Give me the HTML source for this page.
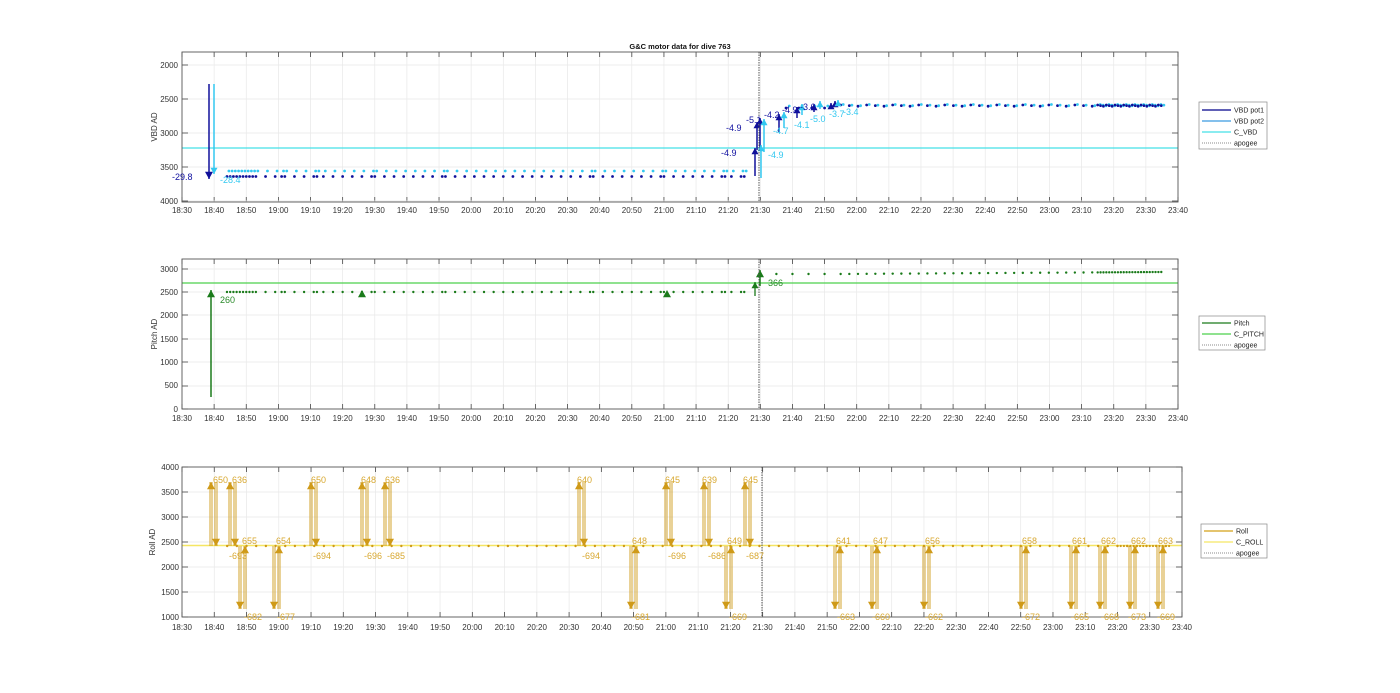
<!DOCTYPE html>
<html><head><meta charset="utf-8"><style>
html,body{margin:0;padding:0;background:#fff;}
svg{display:block;font-family:"Liberation Sans",Arial,sans-serif;}
.t{font-size:8px;fill:#333;}
.lg{font-size:7px;fill:#222;}
</style></head><body>
<svg id="s" width="1400" height="693" viewBox="0 0 1400 693" xmlns="http://www.w3.org/2000/svg">
<rect width="1400" height="693" fill="#fff"/>
<g id="grid"></g>
<g id="data"></g>
<text x="680" y="49" text-anchor="middle" style="font-size:7.5px;font-weight:bold;fill:#111">G&amp;C motor data for dive 763</text>
<!-- y labels -->
<text class="t" transform="translate(157,127) rotate(-90)" text-anchor="middle">VBD AD</text>
<text class="t" transform="translate(157,334) rotate(-90)" text-anchor="middle">Pitch AD</text>
<text class="t" transform="translate(155,542) rotate(-90)" text-anchor="middle">Roll AD</text>
<g class="t" text-anchor="end">
<text x="178" y="68">2000</text><text x="178" y="102">2500</text><text x="178" y="136">3000</text><text x="178" y="170">3500</text><text x="178" y="204">4000</text>
<text x="178" y="272">3000</text><text x="178" y="295">2500</text><text x="178" y="318">2000</text><text x="178" y="342">1500</text><text x="178" y="365">1000</text><text x="178" y="388">500</text><text x="178" y="412">0</text>
<text x="179" y="470">4000</text><text x="179" y="495">3500</text><text x="179" y="520">3000</text><text x="179" y="545">2500</text><text x="179" y="570">2000</text><text x="179" y="595">1500</text><text x="179" y="620">1000</text>
</g>
<g class="t" text-anchor="middle">
<text x="182" y="213">18:30</text><text x="214.1" y="213">18:40</text><text x="246.3" y="213">18:50</text><text x="278.4" y="213">19:00</text><text x="310.5" y="213">19:10</text><text x="342.7" y="213">19:20</text><text x="374.8" y="213">19:30</text><text x="406.9" y="213">19:40</text><text x="439" y="213">19:50</text><text x="471.2" y="213">20:00</text><text x="503.3" y="213">20:10</text><text x="535.4" y="213">20:20</text><text x="567.6" y="213">20:30</text><text x="599.7" y="213">20:40</text><text x="631.8" y="213">20:50</text><text x="664" y="213">21:00</text><text x="696.1" y="213">21:10</text><text x="728.2" y="213">21:20</text><text x="760.3" y="213">21:30</text><text x="792.5" y="213">21:40</text><text x="824.6" y="213">21:50</text><text x="856.7" y="213">22:00</text><text x="888.9" y="213">22:10</text><text x="921" y="213">22:20</text><text x="953.1" y="213">22:30</text><text x="985.3" y="213">22:40</text><text x="1017.4" y="213">22:50</text><text x="1049.5" y="213">23:00</text><text x="1081.6" y="213">23:10</text><text x="1113.8" y="213">23:20</text><text x="1145.9" y="213">23:30</text><text x="1178" y="213">23:40</text>
</g>
<g class="t" text-anchor="middle">
<text x="182" y="421">18:30</text><text x="214.1" y="421">18:40</text><text x="246.3" y="421">18:50</text><text x="278.4" y="421">19:00</text><text x="310.5" y="421">19:10</text><text x="342.7" y="421">19:20</text><text x="374.8" y="421">19:30</text><text x="406.9" y="421">19:40</text><text x="439" y="421">19:50</text><text x="471.2" y="421">20:00</text><text x="503.3" y="421">20:10</text><text x="535.4" y="421">20:20</text><text x="567.6" y="421">20:30</text><text x="599.7" y="421">20:40</text><text x="631.8" y="421">20:50</text><text x="664" y="421">21:00</text><text x="696.1" y="421">21:10</text><text x="728.2" y="421">21:20</text><text x="760.3" y="421">21:30</text><text x="792.5" y="421">21:40</text><text x="824.6" y="421">21:50</text><text x="856.7" y="421">22:00</text><text x="888.9" y="421">22:10</text><text x="921" y="421">22:20</text><text x="953.1" y="421">22:30</text><text x="985.3" y="421">22:40</text><text x="1017.4" y="421">22:50</text><text x="1049.5" y="421">23:00</text><text x="1081.6" y="421">23:10</text><text x="1113.8" y="421">23:20</text><text x="1145.9" y="421">23:30</text><text x="1178" y="421">23:40</text>
</g>
<g class="t" text-anchor="middle">
<text x="182" y="630">18:30</text><text x="214.3" y="630">18:40</text><text x="246.5" y="630">18:50</text><text x="278.8" y="630">19:00</text><text x="311" y="630">19:10</text><text x="343.3" y="630">19:20</text><text x="375.6" y="630">19:30</text><text x="407.8" y="630">19:40</text><text x="440.1" y="630">19:50</text><text x="472.3" y="630">20:00</text><text x="504.6" y="630">20:10</text><text x="536.9" y="630">20:20</text><text x="569.1" y="630">20:30</text><text x="601.4" y="630">20:40</text><text x="633.6" y="630">20:50</text><text x="665.9" y="630">21:00</text><text x="698.2" y="630">21:10</text><text x="730.4" y="630">21:20</text><text x="762.7" y="630">21:30</text><text x="794.9" y="630">21:40</text><text x="827.2" y="630">21:50</text><text x="859.5" y="630">22:00</text><text x="891.7" y="630">22:10</text><text x="924" y="630">22:20</text><text x="956.2" y="630">22:30</text><text x="988.5" y="630">22:40</text><text x="1020.8" y="630">22:50</text><text x="1053" y="630">23:00</text><text x="1085.3" y="630">23:10</text><text x="1117.5" y="630">23:20</text><text x="1149.8" y="630">23:30</text><text x="1182" y="630">23:40</text>
</g>
<!-- panel 1 labels -->
<g style="font-size:9px">
<text x="172" y="180" fill="#1010a0">-29.8</text>
<text x="220" y="183" fill="#33c8f0">-28.4</text>
<text x="721" y="156" fill="#1010a0">-4.9</text>
<text x="726" y="131" fill="#1010a0">-4.9</text>
<text x="746" y="123" fill="#1010a0">-5.1</text>
<text x="764" y="118" fill="#1010a0">-4.2</text>
<text x="782" y="113" fill="#1010a0">-4.9</text>
<text x="800" y="110" fill="#1010a0">-3.6</text>
<text x="768" y="158" fill="#33c8f0">-4.9</text>
<text x="773" y="134" fill="#33c8f0">-4.7</text>
<text x="794" y="128" fill="#33c8f0">-4.1</text>
<text x="810" y="122" fill="#33c8f0">-5.0</text>
<text x="829" y="117" fill="#33c8f0">-3.7</text>
<text x="843" y="115" fill="#33c8f0">-3.4</text>
</g>
<g style="font-size:9px" fill="#2a8a2a">
<text x="220" y="303">260</text><text x="768" y="286">366</text>
</g>
<!-- legends -->
<g>
<rect x="1199" y="102" width="68" height="47" fill="#fff" stroke="#888" stroke-width="0.7"/>
<line x1="1202" y1="110" x2="1231" y2="110" stroke="#00008b" stroke-width="1.2"/><text class="lg" x="1234" y="112.5">VBD pot1</text>
<line x1="1202" y1="121" x2="1231" y2="121" stroke="#3a9be0" stroke-width="1.2"/><text class="lg" x="1234" y="123.5">VBD pot2</text>
<line x1="1202" y1="132" x2="1231" y2="132" stroke="#44e0e8" stroke-width="1.2"/><text class="lg" x="1234" y="134.5">C_VBD</text>
<line x1="1202" y1="143" x2="1231" y2="143" stroke="#666" stroke-width="0.8" stroke-dasharray="1,1"/><text class="lg" x="1234" y="145.5">apogee</text>
<rect x="1199" y="316" width="66" height="34" fill="#fff" stroke="#888" stroke-width="0.7"/>
<line x1="1202" y1="323" x2="1231" y2="323" stroke="#1a7a1a" stroke-width="1.2"/><text class="lg" x="1234" y="325.5">Pitch</text>
<line x1="1202" y1="334" x2="1231" y2="334" stroke="#4cd14c" stroke-width="1.2"/><text class="lg" x="1234" y="336.5">C_PITCH</text>
<line x1="1202" y1="345" x2="1231" y2="345" stroke="#666" stroke-width="0.8" stroke-dasharray="1,1"/><text class="lg" x="1234" y="347.5">apogee</text>
<rect x="1201" y="524" width="66" height="34" fill="#fff" stroke="#888" stroke-width="0.7"/>
<line x1="1204" y1="531" x2="1233" y2="531" stroke="#d4a017" stroke-width="1.2"/><text class="lg" x="1236" y="533.5">Roll</text>
<line x1="1204" y1="542" x2="1233" y2="542" stroke="#f5e663" stroke-width="1.2"/><text class="lg" x="1236" y="544.5">C_ROLL</text>
<line x1="1204" y1="553" x2="1233" y2="553" stroke="#666" stroke-width="0.8" stroke-dasharray="1,1"/><text class="lg" x="1236" y="555.5">apogee</text>
</g>
<!-- roll labels static -->
<g style="font-size:9px" fill="#d8a830">
<text x="213" y="483">650</text><text x="232" y="483">636</text><text x="229" y="559">-693</text>
<text x="242" y="544">655</text><text x="244" y="620">-682</text>
<text x="276" y="544">654</text><text x="277" y="620">-677</text>
<text x="311" y="483">650</text><text x="313" y="559">-694</text>
<text x="361" y="483">648</text><text x="364" y="559">-696</text>
<text x="385" y="483">636</text><text x="387" y="559">-685</text>
<text x="577" y="483">640</text><text x="582" y="559">-694</text>
<text x="632" y="544">648</text><text x="632" y="620">-681</text>
<text x="665" y="483">645</text><text x="668" y="559">-696</text>
<text x="702" y="483">639</text><text x="708" y="559">-686</text>
<text x="727" y="544">649</text><text x="729" y="620">-669</text>
<text x="743" y="483">645</text><text x="746" y="559">-687</text>
<text x="836" y="544">641</text><text x="837" y="620">-663</text>
<text x="873" y="544">647</text><text x="872" y="620">-660</text>
<text x="925" y="544">656</text><text x="925" y="620">-662</text>
<text x="1022" y="544">658</text><text x="1022" y="620">-672</text>
<text x="1072" y="544">661</text><text x="1071" y="620">-665</text>
<text x="1101" y="544">662</text><text x="1101" y="620">-668</text>
<text x="1131" y="544">662</text><text x="1128" y="620">-673</text>
<text x="1158" y="544">663</text><text x="1157" y="620">-669</text>
</g>
</svg>
<script>
(function(){
var NS="http://www.w3.org/2000/svg",G=document.getElementById("grid"),D=document.getElementById("data");
function el(p,n,a){var e=document.createElementNS(NS,n);for(var k in a)e.setAttribute(k,a[k]);p.appendChild(e);return e;}
function line(p,x1,y1,x2,y2,c,w,da){var a={x1:x1,y1:y1,x2:x2,y2:y2,stroke:c,"stroke-width":w};if(da)a["stroke-dasharray"]=da;return el(p,"line",a);}
var panels=[{l:182,r:1178,t:52,b:202,ys:[65,99,133,167,201]},{l:182,r:1178,t:259,b:409,ys:[269,292,315,339,362,386,409]},{l:182,r:1182,t:467,b:617,ys:[467,492,517,542,567,592,617]}];
panels.forEach(function(P){
 el(G,"rect",{x:P.l,y:P.t,width:P.r-P.l,height:P.b-P.t,fill:"#fff"});
 for(var i=0;i<=31;i++){var x=P.l+i*(P.r-P.l)/31;line(G,x,P.t,x,P.b,"#e8e8e8",0.7);line(G,x,P.t,x,P.t+5,"#444",0.8);line(G,x,P.b,x,P.b-5,"#444",0.8);}
 P.ys.forEach(function(y){line(G,P.l,y,P.r,y,"#e8e8e8",0.7);line(G,P.l,y,P.l+6,y,"#444",0.8);line(G,P.r,y,P.r-6,y,"#444",0.8);});
});
function X1(t){return 182+t*996/310;} function X3(t){return 182+t*1000/310;}
function dot(x,y,c,r){el(D,"circle",{cx:x,cy:y,r:r||1.4,fill:c});}
function tri(x,y,c,up,s){s=s||4;var d=up?"M"+(x-s)+","+(y+s*1.8)+"L"+x+","+y+"L"+(x+s)+","+(y+s*1.8)+"Z":"M"+(x-s)+","+(y-s*1.8)+"L"+x+","+y+"L"+(x+s)+","+(y-s*1.8)+"Z";el(D,"path",{d:d,fill:c});}
function arr(x,y1,y2,c,w,s){line(D,x,y1,x,y2,c,w||1.5);tri(x,y2,c,y2<y1,s);}
var DB="#10109a",CY="#33c8f0";
line(D,182,148,1178,148,"#44e0e8",1.2);
var pre=[14,15,16,17,18,19,20,21,22,23,26,29,31,32,35,38,41,42,44,47,50,53,56,59,60,63,66,69,72,75,78,81,82,85,88,91,94,97,100,103,106,109,112,115,118,121,124,127,128,131,134,137,140,143,146,149,150,153,156,159,162,165,168,169,171,174,175];
pre.forEach(function(t){dot(X1(t),176.5,DB);dot(X1(t+0.6),171,CY);});
var post=[];for(var t=205;t<285;t+=2.7)post.push(t);for(t=285;t<=305;t+=0.9)post.push(t);
post.forEach(function(t,i){var y=105+((i*7)%3)*0.6;dot(X1(t),y,DB);dot(X1(t+0.8),y-0.5,CY);});
[188,192,196,200].forEach(function(t){dot(X1(t),108,DB);dot(X1(t+1),106,CY);});
arr(209,84,179,DB,1.5,4);arr(214,84,174,CY,1.5,3.5);
arr(755,176,148,DB,1.5,3.5);arr(757,150,122,DB,1.5,3.5);arr(760,148,118,DB,1.5,3.5);
arr(761,178,145,CY,1.5,3.5);arr(764,152,119,CY,1.5,3.5);
arr(779,132,114,DB,1.5,3.5);arr(784,128,112,CY,1.5,3.5);
arr(797,118,107,DB,1.5,3.5);arr(802,115,104,CY,1.5,3.5);
arr(814,112,104,DB,1.5,3.5);arr(820,109,101,CY,1.5,3.5);
arr(831,108,103,DB,1.5,3.5);arr(835,106,101,DB,1.5,3.5);arr(838,105,100,CY,1.5,3.5);
line(D,759,52,759,202,"#555",1,"1.5,1");
var G2="#1a7a1a";
line(D,182,283,1178,283,"#4cd14c",1.2);
pre.forEach(function(t){dot(X1(t),292,G2,1.2);});
post.forEach(function(t,i){dot(X1(t),274-(t-205)*0.02,G2,1.2);});
[185,190,195,200].forEach(function(t){dot(X1(t),274,G2,1.2);});
arr(211,397,290,G2,1.5,4);tri(362,290,G2,true,4);tri(667,290,G2,true,4);
arr(755,296,282,G2,1.3,3.5);arr(760,286,270,G2,1.5,4);
line(D,759,259,759,409,"#555",1,"1.5,1");
var Y3="#cf9a18";
line(D,182,545.5,1182,545.5,"#f5e663",1.6);
for(var t=14;t<=306;t+=3)dot(X3(t),546,Y3,1.2);
for(t=290;t<=306;t+=1)dot(X3(t),546,Y3,1.1);
function dbl(x,y1,y2){line(D,x-1,y1,x-1,y2,Y3,0.9);line(D,x+1,y1,x+1,y2,Y3,0.9);tri(x,y2,Y3,y2<y1,4);}
var hi=[211,230,311,362,385,579,666,704,745],lo=[240,274,631,726,835,872,924,1021,1071,1100,1130,1158];
hi.forEach(function(x){dbl(x,546,482);dbl(x+5,482,546);});
lo.forEach(function(x){dbl(x,546,609);dbl(x+5,609,546);});
line(D,762,467,762,617,"#555",1,"1.5,1");
panels.forEach(function(P){el(D,"rect",{x:P.l,y:P.t,width:P.r-P.l,height:P.b-P.t,fill:"none",stroke:"#555","stroke-width":0.9});});
})();
</script>
</body></html>
